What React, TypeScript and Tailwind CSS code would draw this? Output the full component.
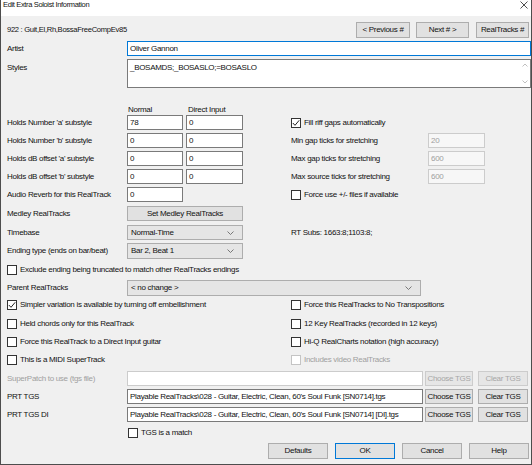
import type { ReactNode } from 'react';

function Btn({ children, className = '', disabled, primary }: { children: ReactNode; className?: string; disabled?: boolean; primary?: boolean }) {
  const tone = disabled
    ? 'border-[#cccccc] bg-[#e6e6e6] text-[#a6a6a6]'
    : primary
      ? 'border-[#0078d7] bg-[#e1e1e1] text-[#111]'
      : 'border-[#adadad] bg-[#e1e1e1] text-[#111]';
  return (
    <div className={`flex shrink-0 items-center justify-center border ${tone} ${className}`}>{children}</div>
  );
}

function TextBox({ value, className = '', disabled, focused }: { value?: string; className?: string; disabled?: boolean; focused?: boolean }) {
  const tone = disabled
    ? 'border-[#cccccc] bg-[#f7f7f7] text-[#a0a0a0]'
    : focused
      ? 'border-[#0078d7] bg-white text-[#111]'
      : 'border-[#7a7a7a] bg-white text-[#111]';
  return (
    <div className={`flex h-full shrink-0 items-center overflow-hidden whitespace-nowrap border pl-[2px] ${tone} ${className}`}>
      {value}
    </div>
  );
}

function Chevron() {
  return (
    <svg width="7" height="4" viewBox="0 0 7 4" className="shrink-0">
      <polyline points="0.5,0.5 3.5,3.5 6.5,0.5" fill="none" stroke="#6b6b6b" strokeWidth="0.9" />
    </svg>
  );
}

function Select({ value, className = '' }: { value: string; className?: string }) {
  return (
    <div className={`flex h-full shrink-0 items-center justify-between border border-[#adadad] bg-[#e5e5e5] pl-[3px] pr-[8px] text-[#111] ${className}`}>
      <span>{value}</span>
      <Chevron />
    </div>
  );
}

function Check({ label, checked, disabled }: { label: string; checked?: boolean; disabled?: boolean }) {
  return (
    <div className={`flex items-center whitespace-nowrap ${disabled ? 'text-[#a0a0a0]' : 'text-[#111]'}`}>
      <div className={`flex h-[10px] w-[10px] shrink-0 items-center justify-center border bg-white ${disabled ? 'border-[#c4c4c4]' : 'border-[#333333]'}`}>
        {checked && (
          <svg width="8" height="8" viewBox="0 0 8 8">
            <polyline points="0.8,4 3,6.3 7.2,1.3" fill="none" stroke="#222" strokeWidth="1" />
          </svg>
        )}
      </div>
      <span className="ml-[3px]">{label}</span>
    </div>
  );
}

function Label({ children, muted }: { children: ReactNode; muted?: boolean }) {
  return <div className={`w-[120px] shrink-0 whitespace-nowrap ${muted ? 'text-[#a0a0a0]' : 'text-[#111]'}`}>{children}</div>;
}

function SplitRow({ left, right, className = '' }: { left: ReactNode; right?: ReactNode; className?: string }) {
  return (
    <div className={`flex shrink-0 items-center ${className}`}>
      <div className="flex h-full w-[284px] shrink-0 items-center">{left}</div>
      <div className="flex h-full flex-1 items-center">{right}</div>
    </div>
  );
}

function TickField({ label, value }: { label: string; value: string }) {
  return (
    <>
      <div className="w-[137px] shrink-0 whitespace-nowrap">{label}</div>
      <TextBox value={value} disabled className="w-[57px]" />
    </>
  );
}

const holds = [
  { label: "Holds Number 'a' substyle", normal: '78', direct: '0', right: <Check label="Fill riff gaps automatically" checked /> },
  { label: "Holds Number 'b' substyle", normal: '0', direct: '0', right: <TickField label="Min gap ticks for stretching" value="20" /> },
  { label: "Holds dB offset 'a' substyle", normal: '0', direct: '0', right: <TickField label="Max gap ticks for stretching" value="600" /> },
  { label: "Holds dB offset 'b' substyle", normal: '0', direct: '0', right: <TickField label="Max source ticks for stretching" value="600" /> },
];

const tgsFile = "Playable RealTracks\\028 - Guitar, Electric, Clean, 60's Soul Funk [SN0714].tgs";
const tgsDiFile = "Playable RealTracks\\028 - Guitar, Electric, Clean, 60's Soul Funk [SN0714] [DI].tgs";

export default function App() {
  return (
    <div className="flex h-[465px] w-[532px] flex-col overflow-hidden border-x border-b border-[#4d4d4d] bg-[#f0f0f0] font-['Liberation_Sans',Arial,sans-serif] text-[8px] tracking-[-0.3px] text-[#111]">
      {/* title bar */}
      <div className="flex h-[16px] shrink-0 items-center justify-between bg-white pl-[2px] pr-[3px]">
        <span className="-mt-[6px] text-[7.5px] tracking-[-0.35px]">Edit Extra Soloist Information</span>
        <svg width="8" height="8" viewBox="0 0 8 8" className="-mt-[6px]">
          <path d="M0.5 0.5 L7.5 7.5 M7.5 0.5 L0.5 7.5" stroke="#222" strokeWidth="0.8" />
        </svg>
      </div>

      <div className="flex flex-col pl-[6px]">
        <div className="mt-[6px] flex h-[16px] items-center pr-[2px]">
          <span className="text-[7.6px] tracking-[-0.3px]">922 : Guit,El,Rh,BossaFreeCompEv85</span>
          <Btn className="ml-auto h-full w-[54px]">&lt; Previous #</Btn>
          <Btn className="ml-[6px] h-full w-[53px]">Next # &gt;</Btn>
          <Btn className="ml-[7px] h-full w-[53px]">RealTracks #</Btn>
        </div>

        <div className="mt-[3px] flex h-[15px] items-center">
          <Label>Artist</Label>
          <TextBox value="Oliver Gannon" focused className="flex-1" />
        </div>

        <div className="mt-[3px] flex h-[29px]">
          <div className="pt-[3px]">
            <Label>Styles</Label>
          </div>
          <div className="flex flex-1 border border-[#7a7a7a] bg-white">
            <div className="flex-1 pl-[2px] pt-[2px]">_BOSAMDS;_BOSASLO;=BOSASLO</div>
            <div className="flex w-[10px] flex-col items-center justify-between py-[3px]">
              <svg width="6" height="4" viewBox="0 0 6 4">
                <polyline points="0.5,3.5 3,1 5.5,3.5" fill="none" stroke="#b0b0b0" strokeWidth="0.8" />
              </svg>
              <svg width="6" height="4" viewBox="0 0 6 4">
                <polyline points="0.5,0.5 3,3 5.5,0.5" fill="none" stroke="#b0b0b0" strokeWidth="0.8" />
              </svg>
            </div>
          </div>
        </div>

        <div className="mt-[16px] flex h-[11px] items-center">
          <div className="w-[121px] shrink-0" />
          <div className="w-[60px] shrink-0">Normal</div>
          <div>Direct Input</div>
        </div>

        {holds.map((row, i) => (
          <SplitRow
            key={row.label}
            className={`${i === 0 ? '' : 'mt-[3px]'} h-[15px]`}
            left={
              <>
                <Label>{row.label}</Label>
                <TextBox value={row.normal} className="w-[56px]" />
                <TextBox value={row.direct} className="ml-[3px] w-[57px]" />
              </>
            }
            right={row.right}
          />
        ))}

        <SplitRow
          className="mt-[3px] h-[15px]"
          left={
            <>
              <Label>Audio Reverb for this RealTrack</Label>
              <TextBox value="0" className="w-[56px]" />
            </>
          }
          right={<Check label="Force use +/- files if available" />}
        />

        <SplitRow
          className="mt-[4px] h-[15px]"
          left={
            <>
              <Label>Medley RealTracks</Label>
              <Btn className="h-full w-[116px]">Set Medley RealTracks</Btn>
            </>
          }
        />

        <SplitRow
          className="mt-[4px] h-[15px]"
          left={
            <>
              <Label>Timebase</Label>
              <Select value="Normal-Time" className="w-[116px]" />
            </>
          }
          right={<span>RT Subs: 1663:8;1103:8;</span>}
        />

        <SplitRow
          className="mt-[3px] h-[16px]"
          left={
            <>
              <Label>Ending type (ends on bar/beat)</Label>
              <Select value="Bar 2, Beat 1" className="w-[116px]" />
            </>
          }
        />

        <div className="mt-[4px] flex h-[14px] items-center">
          <Check label="Exclude ending being truncated to match other RealTracks endings" />
        </div>

        <div className="mt-[3px] flex h-[16px] items-center">
          <Label>Parent RealTracks</Label>
          <Select value="< no change >" className="w-[294px]" />
        </div>

        <SplitRow
          className="mt-[2px] h-[14px]"
          left={<Check label="Simpler variation is available by turning off embellishment" checked />}
          right={<Check label="Force this RealTracks to No Transpositions" />}
        />
        <SplitRow
          className="mt-[5px] h-[14px]"
          left={<Check label="Held chords only for this RealTrack" />}
          right={<Check label="12 Key RealTracks (recorded in 12 keys)" />}
        />
        <SplitRow
          className="mt-[4px] h-[14px]"
          left={<Check label="Force this RealTrack to a Direct Input guitar" />}
          right={<Check label="Hi-Q RealCharts notation (high accuracy)" />}
        />
        <SplitRow
          className="mt-[4px] h-[14px]"
          left={<Check label="This is a MIDI SuperTrack" />}
          right={<Check label="Includes video RealTracks" disabled />}
        />

        <div className="mt-[4px] flex h-[15px] items-center">
          <Label muted>SuperPatch to use (tgs file)</Label>
          <TextBox disabled className="w-[296px] bg-white" />
          <Btn disabled className="ml-[2px] h-full w-[48px]">Choose TGS</Btn>
          <Btn disabled className="ml-[5px] h-full w-[50px]">Clear TGS</Btn>
        </div>

        <div className="mt-[3px] flex h-[15px] items-center">
          <Label>PRT TGS</Label>
          <TextBox value={tgsFile} className="w-[296px]" />
          <Btn className="ml-[2px] h-full w-[48px]">Choose TGS</Btn>
          <Btn className="ml-[5px] h-full w-[50px]">Clear TGS</Btn>
        </div>

        <div className="mt-[3px] flex h-[15px] items-center">
          <Label>PRT TGS DI</Label>
          <TextBox value={tgsDiFile} className="w-[296px]" />
          <Btn className="ml-[2px] h-full w-[48px]">Choose TGS</Btn>
          <Btn className="ml-[5px] h-full w-[50px]">Clear TGS</Btn>
        </div>

        <div className="mt-[4px] flex h-[14px] items-center">
          <div className="w-[121px] shrink-0" />
          <Check label="TGS is a match" />
        </div>

        <div className="mt-[3px] flex h-[16px] justify-end gap-[7px] pr-[2px]">
          <Btn className="h-full w-[60px]">Defaults</Btn>
          <Btn primary className="h-full w-[60px]">OK</Btn>
          <Btn className="h-full w-[60px]">Cancel</Btn>
          <Btn className="h-full w-[60px]">Help</Btn>
        </div>
      </div>
    </div>
  );
}
